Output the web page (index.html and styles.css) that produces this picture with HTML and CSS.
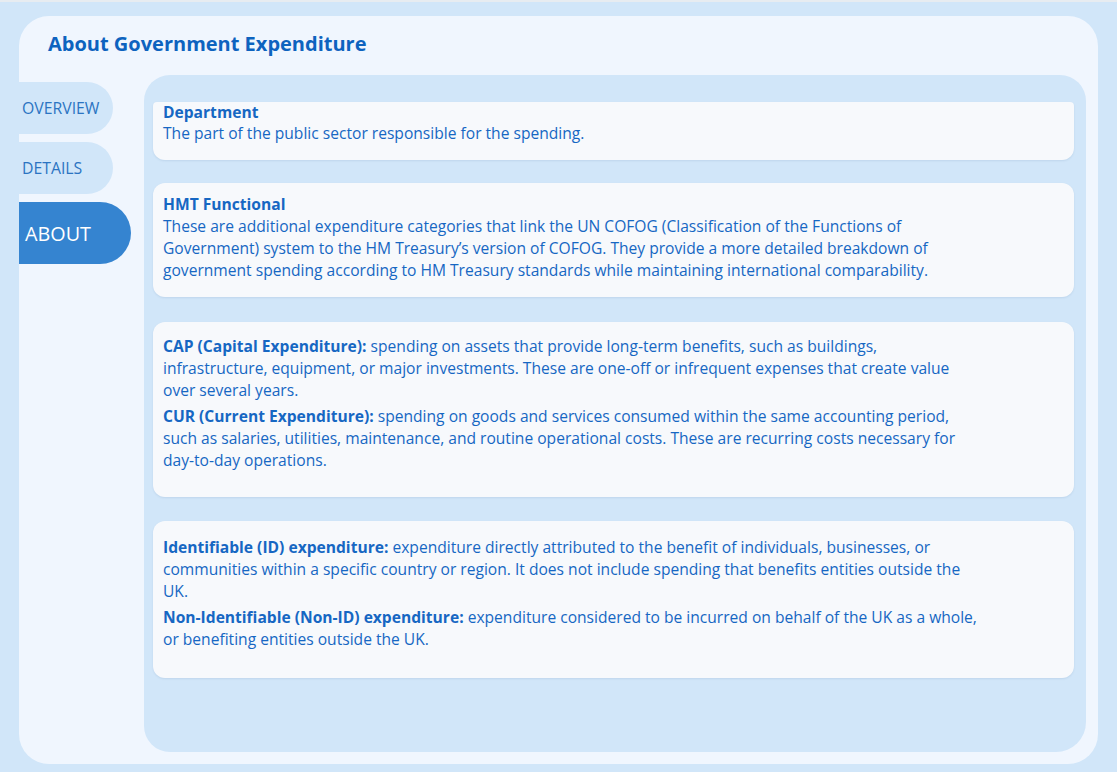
FILE: index.html
```html
<!DOCTYPE html>
<html lang="en">
<head>
<meta charset="utf-8">
<title>About Government Expenditure</title>
<link rel="stylesheet" href="styles.css">
</head>
<body>
<div class="shell">
  <h1 class="title">About Government Expenditure</h1>
  <div class="main">
    <nav class="tabs">
      <div class="tab">OVERVIEW</div>
      <div class="tab">DETAILS</div>
      <div class="tab active">ABOUT</div>
    </nav>
    <section class="panel">
      <div class="scroll">
        <div class="card card-1">
          <div class="term">Department</div>
          <div>The part of the public sector responsible for the spending.</div>
        </div>
        <div class="card card-2">
          <div class="term">HMT Functional</div>
          <div class="text">These are additional expenditure categories that link the UN COFOG (Classification of the Functions of Government) system to the HM Treasury’s version of COFOG. They provide a more detailed breakdown of government spending according to HM Treasury standards while maintaining international comparability.</div>
        </div>
        <div class="card card-3">
          <p class="text"><b>CAP (Capital Expenditure):</b> spending on assets that provide long-term benefits, such as buildings, infrastructure, equipment, or major investments. These are one-off or infrequent expenses that create value over several years.</p>
          <p class="text"><b>CUR (Current Expenditure):</b> spending on goods and services consumed within the same accounting period, such as salaries, utilities, maintenance, and routine operational costs. These are recurring costs necessary for day-to-day operations.</p>
        </div>
        <div class="card card-4">
          <p class="text"><b>Identifiable (ID) expenditure:</b> expenditure directly attributed to the benefit of individuals, businesses, or communities within a specific country or region. It does not include spending that benefits entities outside the UK.</p>
          <p class="text"><b>Non-Identifiable (Non-ID) expenditure:</b> expenditure considered to be incurred on behalf of the UK as a whole, or benefiting entities outside the UK.</p>
        </div>
      </div>
    </section>
  </div>
</div>
</body>
</html>
```
FILE: styles.css
```css
html, body {
  margin: 0;
  padding: 0;
}
body {
  width: 1117px;
  height: 772px;
  box-sizing: border-box;
  background: #d1e6f9;
  border-top: 2px solid #e7ecf1;
  font-family: "Open Sans", "Noto Sans", "Liberation Sans", sans-serif;
  color: #1667c3;
  overflow: hidden;
}
.shell {
  box-sizing: border-box;
  margin: 14px 19px 0 19px;
  height: 748px;
  background: #f0f6fe;
  border-radius: 30px;
  display: flex;
  flex-direction: column;
  padding-bottom: 12px;
  overflow: hidden;
}
.title {
  margin: 0;
  padding: 16px 0 0 29px;
  font-size: 20px;
  line-height: 24px;
  font-weight: 700;
  color: #0d63bf;
}
.main {
  flex: 1;
  display: flex;
  margin-top: 19px;
  min-height: 0;
}
.tabs {
  width: 125px;
  flex: none;
  display: flex;
  flex-direction: column;
  gap: 8px;
  padding-top: 7px;
}
.tab {
  width: 94px;
  height: 52px;
  box-sizing: border-box;
  padding-left: 3px;
  display: flex;
  align-items: center;
  background: #d1e6f9;
  border-radius: 0 26px 26px 0;
  font-size: 15.8px;
  color: #2b74c2;
}
.tab.active {
  width: 112px;
  height: 62px;
  padding-left: 6px;
  border-radius: 0 31px 31px 0;
  background: #3584d0;
  color: #ffffff;
  font-size: 19.8px;
}
.panel {
  flex: 1;
  margin-right: 12px;
  background: #d1e6f9;
  border-radius: 26px 26px 30px 26px;
  padding: 27px 12px 0 9px;
  min-height: 0;
}
.scroll {
  font-size: 15.6px;
  line-height: 22px;
}
.card {
  background: #f7f9fc;
  border-radius: 12px;
  box-shadow: 0 1px 2px rgba(60, 100, 150, 0.12);
  padding: 10px 10px 16px 10px;
  margin-bottom: 23px;
}
.card-1 {
  border-radius: 4px 4px 12px 12px;
  padding-top: 0;
}
.card-1 .term {
  line-height: 20px;
}
.card-2 {
  margin-bottom: 25px;
}
.card-3 {
  padding-top: 13px;
  padding-bottom: 26px;
  margin-bottom: 24px;
}
.card-4 {
  padding-top: 15px;
  padding-bottom: 28px;
}
.term {
  font-weight: 700;
}
.text {
  max-width: 820px;
}
p.text {
  margin: 0;
}
p.text + p.text {
  margin-top: 4px;
}
b {
  font-weight: 700;
}
```
